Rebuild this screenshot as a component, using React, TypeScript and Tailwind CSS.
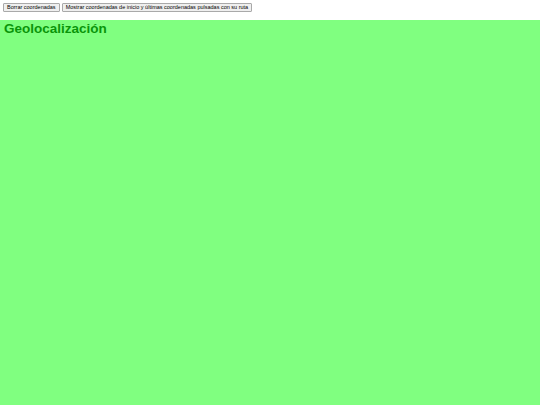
import React from 'react';

const App: React.FC = () => {
  return (
    <div className="flex h-[405px] w-[540px] flex-col bg-white font-['Liberation_Sans',Arial,sans-serif]">
      <div className="flex h-5 shrink-0 items-start gap-[2px] px-[3px] pt-[3px]">
        <button className="h-[9px] border border-[#a9a9a9] bg-[#efefef] px-[3px] text-[5.5px] leading-[7px] text-black rounded-[1px]">
          Borrar coordenadas
        </button>
        <button className="h-[9px] border border-[#a9a9a9] bg-[#efefef] px-[3px] text-[5.5px] leading-[7px] text-black rounded-[1px]">
          Mostrar coordenadas de inicio y últimas coordenadas pulsadas con su ruta
        </button>
      </div>
      <div className="flex-1 bg-[#80ff80] px-[4px] pt-[1px]">
        <h1 className="text-[13.5px] font-bold leading-[16px] text-[#0a950a]">Geolocalización</h1>
      </div>
    </div>
  );
};

export default App;
